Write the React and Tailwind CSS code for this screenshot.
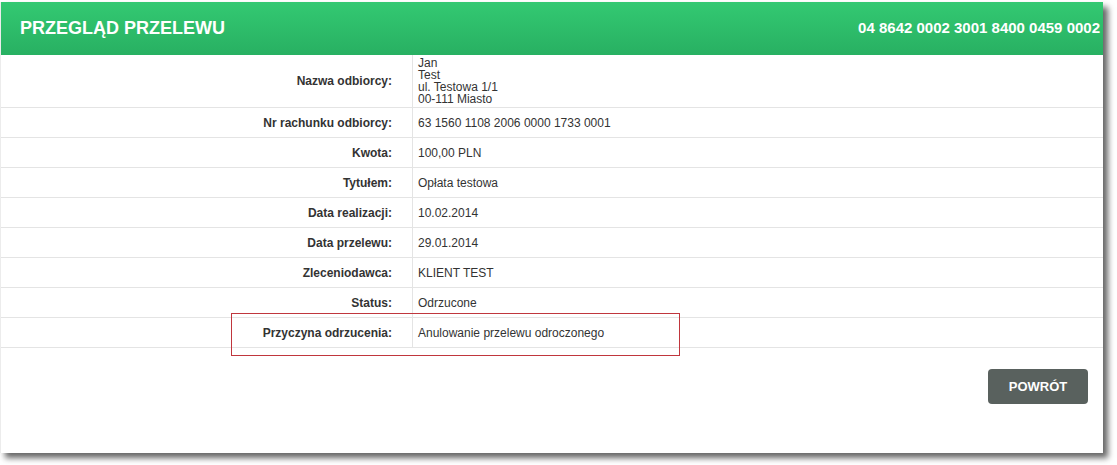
const rows = [
  { label: 'Nr rachunku odbiorcy:', value: '63 1560 1108 2006 0000 1733 0001' },
  { label: 'Kwota:', value: '100,00 PLN' },
  { label: 'Tytułem:', value: 'Opłata testowa' },
  { label: 'Data realizacji:', value: '10.02.2014' },
  { label: 'Data przelewu:', value: '29.01.2014' },
  { label: 'Zleceniodawca:', value: 'KLIENT TEST' },
  { label: 'Status:', value: 'Odrzucone' },
  { label: 'Przyczyna odrzucenia:', value: 'Anulowanie przelewu odroczonego' },
];

function Row({ label, children, tall }) {
  return (
    <div className={`flex border-b border-[#e4e4e4] ${tall ? 'h-[53px]' : 'h-[30px]'}`}>
      <div className="w-[412px] shrink-0 border-r border-[#e4e4e4] pr-[20px] flex items-center justify-end font-bold text-[12px] text-[#333]">
        {label}
      </div>
      <div className="flex-1 pl-[5px] flex items-center text-[12px] text-[#333]">{children}</div>
    </div>
  );
}

export default function App() {
  return (
    <div className="w-[1117px] h-[465px] bg-white" style={{ fontFamily: '"Liberation Sans", Arial, sans-serif' }}>
      <div className="relative w-[1103px] h-[451px] bg-white border-l border-[#ececec] shadow-[5px_5px_6px_rgba(0,0,0,0.6)]">
        <div className="mt-[2px] h-[53px] flex items-center justify-between pl-[19px] pr-[3px] bg-gradient-to-b from-[#33c972] to-[#28b062] text-white font-bold">
          <span className="text-[18px]">PRZEGLĄD PRZELEWU</span>
          <span className="text-[15px]">04 8642 0002 3001 8400 0459 0002</span>
        </div>

        <div className="relative">
          <Row label="Nazwa odbiorcy:" tall>
            <div className="leading-[12px]">
              <div>Jan</div>
              <div>Test</div>
              <div>ul. Testowa 1/1</div>
              <div>00-111 Miasto</div>
            </div>
          </Row>
          {rows.map((r) => (
            <Row key={r.label} label={r.label}>
              {r.value}
            </Row>
          ))}
          {/* highlight annotation */}
          <div className="absolute left-[230px] top-[258px] w-[449px] h-[43px] ring-1 ring-inset ring-[#c0363d] pointer-events-none" />
        </div>

        <div className="flex justify-end pr-[15px] mt-[21px]">
          <button className="w-[100px] h-[35px] rounded-[4px] bg-[#59615e] text-white font-bold text-[13px]">
            POWRÓT
          </button>
        </div>
      </div>
    </div>
  );
}
